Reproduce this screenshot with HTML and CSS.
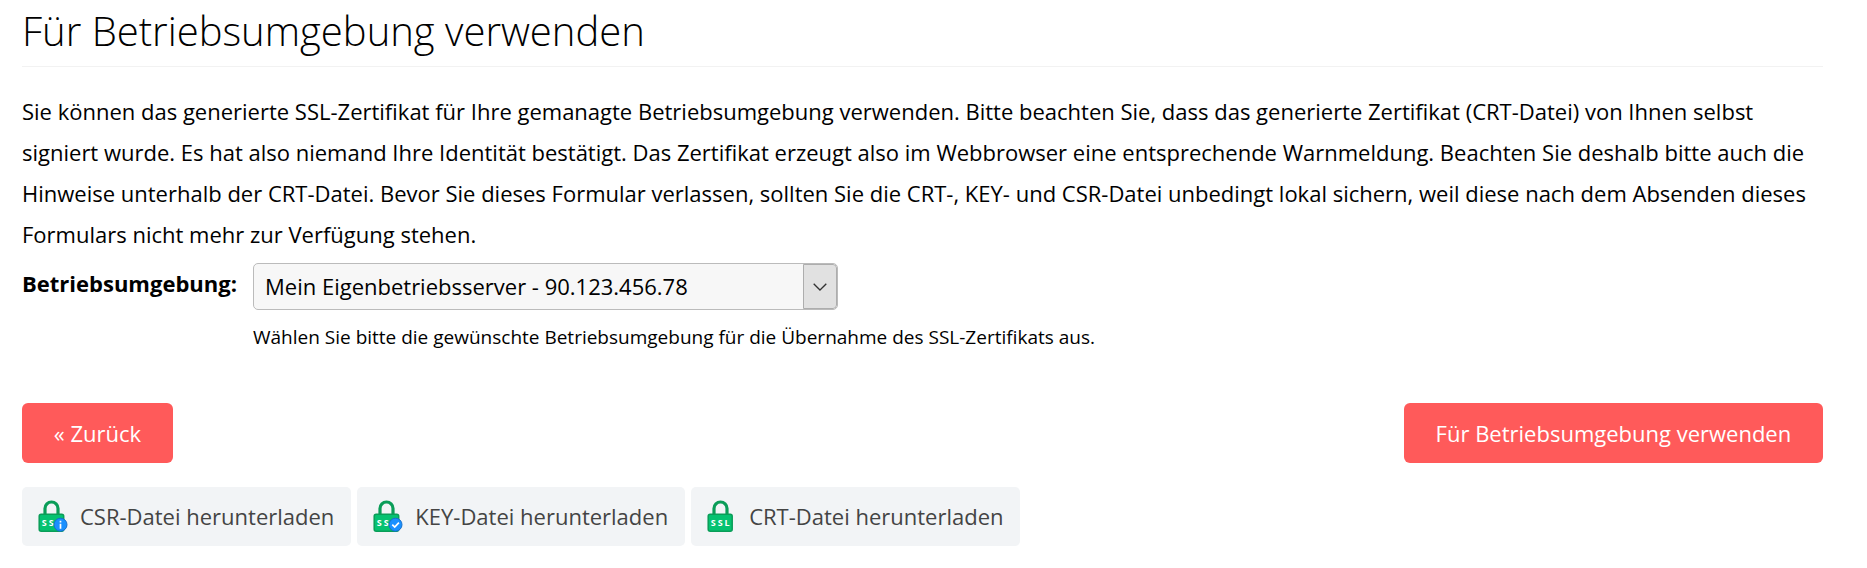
FILE: index.html
```html
<!DOCTYPE html>
<html lang="de">
<head>
    <meta charset="UTF-8">
    <meta name="viewport" content="width=device-width, initial-scale=1.0">
    <title>Für Betriebsumgebung verwenden</title>
    <link rel="stylesheet" href="styles.css">
</head>
<body>

    <h1>Für Betriebsumgebung verwenden</h1>
    <p class="intro">Sie können das generierte SSL-Zertifikat für Ihre gemanagte Betriebsumgebung verwenden. Bitte beachten Sie, dass das generierte Zertifikat (CRT-Datei) von Ihnen selbst signiert wurde. Es hat also niemand Ihre Identität bestätigt. Das Zertifikat erzeugt also im Webbrowser eine entsprechende Warnmeldung. Beachten Sie deshalb bitte auch die Hinweise unterhalb der CRT-Datei. Bevor Sie dieses Formular verlassen, sollten Sie die CRT-, KEY- und CSR-Datei unbedingt lokal sichern, weil diese nach dem Absenden dieses Formulars nicht mehr zur Verfügung stehen.</p>

    <form>
        <div class="form-row">
            <label for="environment">Betriebsumgebung:</label>
            <div class="field">
                <div class="select">
                    <select id="environment" name="environment">
                        <option>Mein Eigenbetriebsserver - 90.123.456.78</option>
                    </select>
                    <span class="arrow">
                        <svg width="14" height="8" viewBox="0 0 14 8"><path d="M.7.7 7 7 13.300.7" fill="none" stroke="#333" stroke-width="1.300"/></svg>
                    </span>
                </div>
                <div class="hint">Wählen Sie bitte die gewünschte Betriebsumgebung für die Übernahme des SSL-Zertifikats aus.</div>
            </div>
        </div>
        <div class="actions">
            <button type="button" class="btn">« Zurück</button>
            <button type="submit" class="btn">Für Betriebsumgebung verwenden</button>
        </div>
    </form>

    <div class="downloads">
        <a class="download">
            <svg class="icon" viewBox="0 0 30 32">
                <path class="shackle" d="M7 14V8.500a6.500 6.500 0 0 1 13 0V14"/>
                <rect class="lock" x="1.200" y="14.200" width="24.500" height="17" rx="2"/>
                <text class="ssl" x="3.700" y="26">SS</text>
                <circle class="badge" cx="22.500" cy="24.700" r="6.500"/>
                <path class="mark" d="M22.500 20.700v1.800M22.500 23.700v5"/>
            </svg>
            CSR-Datei herunterladen
        </a>
        <a class="download">
            <svg class="icon" viewBox="0 0 30 32">
                <path class="shackle" d="M7 14V8.500a6.500 6.500 0 0 1 13 0V14"/>
                <rect class="lock" x="1.200" y="14.200" width="24.500" height="17" rx="2"/>
                <text class="ssl" x="3.700" y="26">SS</text>
                <circle class="badge" cx="22.500" cy="24.700" r="6.500"/>
                <path class="mark" d="M19.300 24.700l2.400 2.300 4.200-4.300"/>
            </svg>
            KEY-Datei herunterladen
        </a>
        <a class="download">
            <svg class="icon" viewBox="0 0 30 32">
                <path class="shackle" d="M7 14V8.500a6.500 6.500 0 0 1 13 0V14"/>
                <rect class="lock" x="1.200" y="14.200" width="24" height="17" rx="2"/>
                <text class="ssl" x="3.700" y="26">SSL</text>
            </svg>
            CRT-Datei herunterladen
        </a>
    </div>

</body>
</html>
```
FILE: styles.css
```css
* {
    box-sizing: border-box;
}
body {
    margin: 0;
    padding: 0 44px 0 22px;
    background-color: #fff;
    color: #000;
    font-family: "Open Sans", sans-serif;
    font-size: 22px;
}
h1 {
    margin: 0;
    height: 67px;
    border-bottom: 1px solid #f2f2f2;
    font-size: 40px;
    font-weight: 300;
    line-height: 62px;
}
.intro {
    margin: 24px 0 0;
    line-height: 41px;
}
.form-row {
    display: flex;
    padding-top: 8px;
}
.form-row label {
    width: 231px;
    font-weight: 700;
    line-height: 41px;
}
.select {
    display: flex;
    width: 585px;
    height: 47px;
    border: 1px solid #bbb;
    border-radius: 5px;
    background-color: #f7f7f7;
    overflow: hidden;
}
.select select {
    flex: 1;
    padding: 0 11px 2px;
    border: none;
    background: none;
    appearance: none;
    color: #000;
    font: inherit;
}
.arrow {
    display: flex;
    align-items: center;
    justify-content: center;
    width: 34px;
    border: 1px solid #adadad;
    border-radius: 0 4px 4px 0;
    background-color: #e1e1e1;
}
.hint {
    font-size: 19px;
    line-height: 54px;
}
.actions {
    display: flex;
    justify-content: space-between;
    margin-top: 39px;
}
.btn {
    height: 60px;
    padding: 0 31.800px;
    border: none;
    border-radius: 6px;
    background-color: #ff5a5a;
    color: #fff;
    font: inherit;
}
.downloads {
    display: flex;
    gap: 6.500px;
    margin-top: 24px;
}
.download {
    display: flex;
    align-items: center;
    gap: 12px;
    height: 59px;
    padding: 0 16.500px 2px 16px;
    border-radius: 5px;
    background-color: #f2f4f6;
    color: #444;
}
.icon {
    width: 30px;
    height: 32px;
}
.shackle {
    fill: none;
    stroke: #0a9d58;
    stroke-width: 3.200;
}
.lock {
    fill: #05c270;
    stroke: #0a9d58;
    stroke-width: 1.500;
}
.ssl {
    fill: #fff;
    font-size: 9px;
    font-weight: 700;
    letter-spacing: 2px;
}
.badge {
    fill: #1a90ff;
    stroke: #1670cc;
    stroke-width: 1;
}
.mark {
    fill: none;
    stroke: #fff;
    stroke-width: 1.700;
}
```
